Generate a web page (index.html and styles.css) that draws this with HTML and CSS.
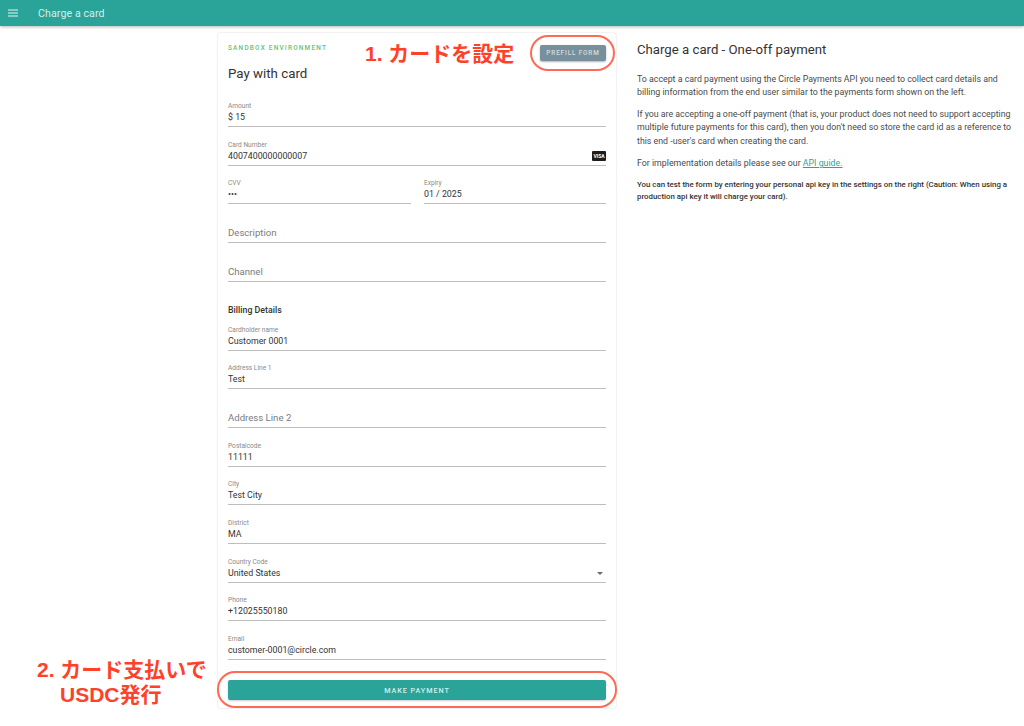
FILE: index.html
```html
<!DOCTYPE html>
<html lang="en">
<head>
<meta charset="utf-8">
<title>Charge a card</title>
<link rel="stylesheet" href="styles.css">
</head>
<body>
<header class="topbar">
  <svg class="menu-icon" width="10" height="8" viewBox="0 0 10 8"><path d="M0 1h10M0 4h10M0 7h10" stroke="#e4f3f1" stroke-width="1.1" fill="none"/></svg>
  <span class="topbar-title">Charge a card</span>
</header>
<main class="layout">
  <section class="card">
    <div class="sandbox">SANDBOX ENVIRONMENT</div>
    <h2 class="card-title">Pay with card</h2>
    <div class="fields">
      <div class="field"><label>Amount</label><div class="value">$ 15</div></div>
      <div class="field"><label>Card Number</label><div class="value">4007400000000007</div><span class="visa">VISA</span></div>
      <div class="field-row">
        <div class="field"><label>CVV</label><div class="value">•••</div></div>
        <div class="field"><label>Expiry</label><div class="value">01 / 2025</div></div>
      </div>
      <div class="field"><div class="placeholder">Description</div></div>
      <div class="field"><div class="placeholder">Channel</div></div>
      <div class="section-title">Billing Details</div>
      <div class="field"><label>Cardholder name</label><div class="value">Customer 0001</div></div>
      <div class="field"><label>Address Line 1</label><div class="value">Test</div></div>
      <div class="field"><div class="placeholder">Address Line 2</div></div>
      <div class="field"><label>Postalcode</label><div class="value">11111</div></div>
      <div class="field"><label>City</label><div class="value">Test City</div></div>
      <div class="field"><label>District</label><div class="value">MA</div></div>
      <div class="field"><label>Country Code</label><div class="value">United States</div><span class="caret"></span></div>
      <div class="field"><label>Phone</label><div class="value">+12025550180</div></div>
      <div class="field"><label>Email</label><div class="value">customer-0001@circle.com</div></div>
    </div>
    <button class="pay-btn" type="button">MAKE PAYMENT</button>
    <button class="prefill-btn" type="button">PREFILL FORM</button>
  </section>
  <section class="info">
    <h2 class="info-title">Charge a card - One-off payment</h2>
    <p>To accept a card payment using the Circle Payments API you need to collect card details and billing information from the end user similar to the payments form shown on the left.</p>
    <p>If you are accepting a one-off payment (that is, your product does not need to support accepting multiple future payments for this card), then you don't need so store the card id as a reference to this end -user's card when creating the card.</p>
    <p>For implementation details please see our <a href="#">API guide.</a></p>
    <p class="note">You can test the form by entering your personal api key in the settings on the right (Caution: When using a production api key it will charge your card).</p>
  </section>
</main>
<div class="note-one">1. カードを設定</div>
<div class="note-two">2. カード支払いで<span class="note-two-line">USDC発行</span></div>
<div class="ring ring-one"></div>
<div class="ring ring-two"></div>
</body>
</html>
```
FILE: styles.css
```css
* { box-sizing: border-box; }
html, body { margin: 0; height: 726px; overflow: hidden; }
body { background: #fff; font-family: Roboto, "Noto Sans CJK JP", sans-serif; color: #2f2f2f; position: relative; }
.topbar { height: 26px; background: #2aa498; display: flex; align-items: center; padding: 0 0 0 8px; box-shadow: 0 1px 3px rgba(0,0,0,.28); }
.menu-icon { flex: none; margin-right: 20px; }
.topbar-title { color: #d5eeeb; font-size: 10.6px; letter-spacing: .1px; }
.layout { display: flex; align-items: flex-start; padding: 7px 0 0 218px; }
.card { position: relative; width: 398px; height: 675px; flex: none; padding: 11px 10px 0 10px; border-radius: 3px; box-shadow: 0 0 2px rgba(0,0,0,.2); background: #fff; }
.sandbox { font-size: 6.4px; line-height: 8px; font-weight: 500; letter-spacing: 1.25px; color: #5fc46f; }
.card-title { margin: 13px 0 0; font-size: 13.3px; line-height: 17px; font-weight: 400; color: #333; }
.fields { margin-top: 6.5px; display: flex; flex-direction: column; }
.field { position: relative; flex: none; height: 38.65px; border-bottom: 1px solid #bdbdbd; display: flex; flex-direction: column; justify-content: flex-end; padding-bottom: 3px; }
.field label { font-size: 6.6px; line-height: 8px; margin-bottom: 2px; color: #8a8a8a; }
.value { font-size: 8.8px; line-height: 11px; color: #333; }
.placeholder { font-size: 9.6px; line-height: 12px; color: #7b7b7b; }
.field-row { display: flex; gap: 13px; }
.field-row .field { flex: 1; }
.field-row .field:first-child { flex: 0 0 183px; }
.section-title { height: 30.4px; padding-top: 22px; font-size: 8.8px; line-height: 12px; font-weight: 500; color: #333; }
.visa { position: absolute; right: 0; bottom: 4px; width: 14px; height: 10px; border-radius: 1px; background: #1c1c1c; color: #fff; font-size: 5px; line-height: 10px; font-weight: 700; text-align: center; }
.caret { position: absolute; right: 3px; bottom: 7px; border-left: 3.5px solid transparent; border-right: 3.5px solid transparent; border-top: 3.5px solid #6b6b6b; }
.pay-btn { display: block; width: 378px; height: 20px; margin-top: 20px; border: 0; border-radius: 2px; background: #2aa498; color: #d5eeeb; font: 500 7.2px/20px Roboto, sans-serif; letter-spacing: .95px; box-shadow: 0 1px 2px rgba(0,0,0,.2); }
.prefill-btn { position: absolute; top: 12px; right: 10px; width: 66px; height: 16px; padding: 0; border: 0; border-radius: 2px; background: #78909c; color: #d4dcdf; font: 500 6.4px/16px Roboto, sans-serif; letter-spacing: .85px; box-shadow: 0 1px 2px rgba(0,0,0,.3); }
.info { width: 378px; flex: none; margin-left: 21px; padding-top: 8px; color: #4a4a4a; }
.info-title { margin: 0 0 14.5px; font-size: 13.2px; line-height: 17px; font-weight: 400; color: #333; }
.info p { margin: 0 0 8.7px; font-size: 8.8px; line-height: 13.4px; }
.info a { color: #2aa498; }
.info .note { font-size: 7.87px; line-height: 12.4px; font-weight: 500; color: #333; }
.note-one, .note-two { position: absolute; color: #ff4129; font-weight: 700; font-family: "Liberation Sans", "Noto Sans CJK JP", sans-serif; white-space: nowrap; }
.note-one { left: 365px; top: 40px; font-size: 21px; line-height: 28px; }
.note-two { left: 37px; top: 657px; font-size: 21px; line-height: 25px; }
.note-two-line { display: block; margin-left: 23px; }
.ring { position: absolute; border: 2px solid #ff6a55; border-radius: 18px; }
.ring-one { left: 530px; top: 35px; width: 85px; height: 36px; }
.ring-two { left: 217px; top: 671px; width: 400px; height: 37px; }
```
